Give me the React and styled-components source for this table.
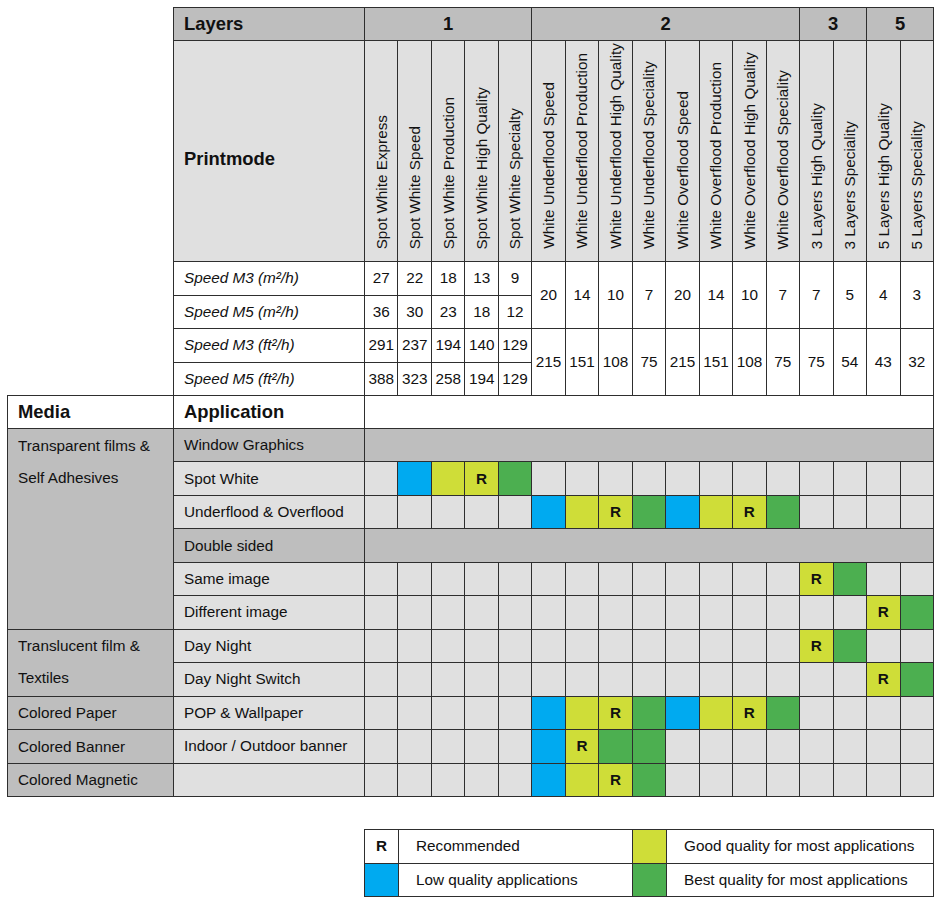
import React from 'react'
import styled, { createGlobalStyle } from 'styled-components'

const GlobalStyle = createGlobalStyle`
    body {
        margin: 0;
        background: #fff;
        font-family: "Liberation Sans", Arial, sans-serif;
        color: #111;
    }
`

const colors = {
    head: '#bebebe',
    light: '#e0e0e0',
    white: '#ffffff',
    b: '#00aaf0',
    y: '#cfdd38',
    Y: '#cfdd38',
    g: '#4caf50',
    '.': '#e0e0e0',
}

const Page = styled.div`
    padding: 7px 0 0 7px;
    width: 927px;
    display: flex;
    flex-direction: column;
    align-items: flex-end;
    gap: 32px;
`

const Table = styled.table`
    border-collapse: collapse;
    table-layout: fixed;
    width: ${(p) => p.$width}px;
    font-size: 15.3px;
`

const Row = styled.tr`
    height: ${(p) => p.$h || 33.45}px;
`

const Cell = styled.td`
    border: 1px solid #2e2e2e;
    background: ${(p) => p.$bg || '#fff'};
    text-align: ${(p) => p.$align || 'left'};
    font-weight: ${(p) => (p.$bold ? 700 : 400)};
    font-style: ${(p) => (p.$italic ? 'italic' : 'normal')};
    font-size: ${(p) => p.$size || 15.3}px;
    padding: ${(p) => (p.$align === 'center' ? '0' : '0 10px')};
    vertical-align: middle;
    white-space: nowrap;
    overflow: hidden;
`

const Blank = styled.td`
    border: none;
    background: #fff;
`

const MediaCell = styled(Cell)`
    vertical-align: top;
    line-height: 32px;
    padding-top: 0.5px;
    white-space: normal;
`

const TitleCell = styled(Cell)`
    padding-top: ${(p) => p.$offset || 0}px;
`

const ModeCell = styled(Cell)`
    vertical-align: bottom;
    padding: 0 0 8px 0;
    text-align: center;
`

const ModeText = styled.span`
    display: inline-block;
    writing-mode: vertical-rl;
    transform: rotate(180deg);
    white-space: nowrap;
    line-height: 1;
`

const LegendText = styled(Cell)`
    padding-left: 17px;
`

const groups = [
    { label: '1', span: 5 },
    { label: '2', span: 8 },
    { label: '3', span: 2 },
    { label: '5', span: 2 },
]

const modes = [
    'Spot White Express',
    'Spot White Speed',
    'Spot White Production',
    'Spot White High Quality',
    'Spot White Specialty',
    'White Underflood Speed',
    'White Underflood Production',
    'White Underflood High Quality',
    'White Underflood Speciality',
    'White Overflood Speed',
    'White Overflood Production',
    'White Overflood High Quality',
    'White Overflood Speciality',
    '3 Layers High Quality',
    '3 Layers Speciality',
    '5 Layers High Quality',
    '5 Layers Speciality',
]

const speeds = [
    { label: 'Speed M3 (m²/h)', own: [27, 22, 18, 13, 9], shared: [20, 14, 10, 7, 20, 14, 10, 7, 7, 5, 4, 3] },
    { label: 'Speed M5 (m²/h)', own: [36, 30, 23, 18, 12] },
    { label: 'Speed M3 (ft²/h)', own: [291, 237, 194, 140, 129], shared: [215, 151, 108, 75, 215, 151, 108, 75, 75, 54, 43, 32] },
    { label: 'Speed M5 (ft²/h)', own: [388, 323, 258, 194, 129] },
]

const rows = [
    { media: ['Transparent films &', 'Self Adhesives'], span: 6, app: 'Window Graphics', section: true },
    { app: 'Spot White', cells: '.byYg............' },
    { app: 'Underflood & Overflood', cells: '.....byYgbyYg....' },
    { app: 'Double sided', section: true },
    { app: 'Same image', cells: '.............Yg..' },
    { app: 'Different image', cells: '...............Yg' },
    { media: ['Translucent film &', 'Textiles'], span: 2, app: 'Day Night', cells: '.............Yg..' },
    { app: 'Day Night Switch', cells: '...............Yg' },
    { media: ['Colored Paper'], span: 1, app: 'POP & Wallpaper', cells: '.....byYgbyYg....' },
    { media: ['Colored Banner'], span: 1, app: 'Indoor / Outdoor banner', cells: '.....bYgg........' },
    { media: ['Colored Magnetic'], span: 1, app: '', cells: '.....byYg........' },
]

function MainTable() {
    return (
        <Table $width={927}>
            <colgroup>
                <col style={{ width: 166 }} />
                <col style={{ width: 191 }} />
                {modes.map((m) => (
                    <col key={m} />
                ))}
            </colgroup>
            <tbody>
                <Row $h={33}>
                    <Blank rowSpan={6} />
                    <Cell $bg={colors.head} $bold $size={18.4}>Layers</Cell>
                    {groups.map((g) => (
                        <Cell key={g.label} colSpan={g.span} $bg={colors.head} $bold $size={18.4} $align="center">
                            {g.label}
                        </Cell>
                    ))}
                </Row>
                <Row $h={221}>
                    <TitleCell $bg={colors.light} $bold $size={18.4} $offset={15}>Printmode</TitleCell>
                    {modes.map((m) => (
                        <ModeCell key={m} $bg={colors.light}>
                            <ModeText>{m}</ModeText>
                        </ModeCell>
                    ))}
                </Row>
                {speeds.map((s) => (
                    <Row key={s.label} $h={33.5}>
                        <Cell $italic>{s.label}</Cell>
                        {s.own.map((v, i) => (
                            <Cell key={i} $align="center">{v}</Cell>
                        ))}
                        {s.shared &&
                            s.shared.map((v, i) => (
                                <Cell key={'s' + i} rowSpan={2} $align="center">{v}</Cell>
                            ))}
                    </Row>
                ))}
                <Row $h={33}>
                    <Cell $bold $size={18.4}>Media</Cell>
                    <Cell $bold $size={18.4}>Application</Cell>
                    <Cell colSpan={17} />
                </Row>
                {rows.map((r) => (
                    <Row key={r.app + (r.media ? r.media[0] : '')}>
                        {r.media && (
                            <MediaCell rowSpan={r.span} $bg={colors.head}>
                                {r.media.map((line) => (
                                    <div key={line}>{line}</div>
                                ))}
                            </MediaCell>
                        )}
                        <Cell $bg={r.section ? colors.head : colors.light}>{r.app}</Cell>
                        {r.section ? (
                            <Cell colSpan={17} $bg={colors.head} />
                        ) : (
                            r.cells.split('').map((c, i) => (
                                <Cell key={i} $bg={colors[c]} $align="center" $bold>
                                    {c === 'Y' ? 'R' : ''}
                                </Cell>
                            ))
                        )}
                    </Row>
                ))}
            </tbody>
        </Table>
    )
}

function Legend() {
    return (
        <Table $width={570}>
            <colgroup>
                <col style={{ width: 34 }} />
                <col style={{ width: 234 }} />
                <col style={{ width: 34 }} />
                <col />
            </colgroup>
            <tbody>
                <Row $h={33.5}>
                    <Cell $align="center" $bold>R</Cell>
                    <LegendText>Recommended</LegendText>
                    <Cell $bg={colors.y} />
                    <LegendText>Good quality for most applications</LegendText>
                </Row>
                <Row $h={33.5}>
                    <Cell $bg={colors.b} />
                    <LegendText>Low quality applications</LegendText>
                    <Cell $bg={colors.g} />
                    <LegendText>Best quality for most applications</LegendText>
                </Row>
            </tbody>
        </Table>
    )
}

export default function App() {
    return (
        <Page>
            <GlobalStyle />
            <MainTable />
            <Legend />
        </Page>
    )
}
